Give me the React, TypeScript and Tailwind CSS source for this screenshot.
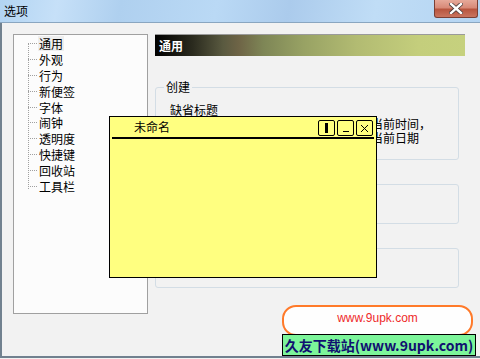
import {ReactNode} from "react";

const font = {fontFamily: '"Noto Sans CJK SC", "Liberation Sans", sans-serif'};

const treeItems: string[] = ["通用", "外观", "行为", "新便签", "字体", "闹钟", "透明度", "快捷键", "回收站", "工具栏"];

function TitleBar() {
    return (
        <div className="relative h-[23px] flex items-center border-b border-[#8aa6c0] bg-[linear-gradient(100deg,#b2d4f2_0%,#c6e0f8_12%,#afd0ef_25%,#bad9f5_45%,#abcbec_60%,#c0ddf6_78%,#b4d4f2_100%)]">
            <span className="pl-[4px] text-[12px] text-black leading-none">选项</span>
            <div className="absolute right-[2px] top-0 w-[44px] h-[18px] rounded-b-[3px] border border-[#7a3f35] border-t-0 bg-[linear-gradient(#e6a99a_0%,#d88a78_45%,#b8553f_55%,#c9745f_100%)] flex items-center justify-center">
                <svg width="14" height="11" viewBox="0 0 14 11">
                    <path d="M2 1 L12 10 M12 1 L2 10" stroke="#4a3a3a" strokeWidth="4" strokeLinecap="square"/>
                    <path d="M2 1 L12 10 M12 1 L2 10" stroke="#ffffff" strokeWidth="2.4" strokeLinecap="square"/>
                </svg>
            </div>
        </div>
    )
}

function Tree() {
    return (
        <div className="w-[135px] h-[280px] border border-[#a0a0a0] bg-[#fcfcfc] pt-[1px] relative">
            <div className="absolute left-[14px] top-[9px] h-[145px] border-l border-dotted border-[#a0a0a0]"></div>
            <ul>
                {treeItems.map((name, i) => (
                    <li key={i} className="h-[15.8px] flex items-center">
                        <span className="ml-[14px] w-[9px] border-t border-dotted border-[#a0a0a0]"></span>
                        <span className={`ml-[1px] px-[1px] text-[12px] leading-[15px] text-black ${i === 0 ? "bg-[#eeeeee]" : ""}`}>{name}</span>
                    </li>
                ))}
            </ul>
        </div>
    )
}

function GroupBox({label, className, children}: { label?: string, className: string, children?: ReactNode }) {
    return (
        <div className={`relative w-[304px] border border-[#d3dde5] rounded-[3px] ${className}`}>
            {label && (
                <span className="absolute left-[8px] -top-[9px] px-[2px] bg-[#f2f2f2] text-[12px] leading-[16px] text-black">{label}</span>
            )}
            {children}
        </div>
    )
}

function Settings() {
    return (
        <div className="flex flex-col w-[310px]">
            <div className="h-[22px] flex items-center bg-[linear-gradient(90deg,#000000_0%,#2a2a1e_12%,#5a5a40_22%,#6e6446_27%,#7e8656_35%,#98a264_48%,#b2bb72_65%,#c4ce7c_85%,#c6d17e_100%)] border-t border-[#9a9a9a]">
                <span className="pl-[4px] text-[12px] font-bold text-white leading-none">通用</span>
            </div>
            <GroupBox label="创建" className="mt-[31px] h-[73px]">
                <div className="pl-[14px] pt-[14px] text-[12px] leading-[15px] text-black">缺省标题</div>
                <div className="pl-[215px] text-[12px] leading-[14px] text-black">
                    <div>当前时间，</div>
                    <div>当前日期</div>
                </div>
            </GroupBox>
            <GroupBox className="mt-[24px] h-[40px]"/>
            <GroupBox className="mt-[24px] h-[40px]"/>
        </div>
    )
}

function StickyNote() {
    return (
        <div className="absolute left-[109px] top-[116px] w-[268px] h-[162px] border border-black bg-[#ffff80]">
            <div className="mx-[2px] h-[22px] border-b-2 border-black flex items-center">
                <span className="ml-[22px] text-[12px] leading-none text-black">未命名</span>
                <div className="ml-auto mr-[1px] flex gap-[2px] mt-[2px]">
                    <div className="w-[17px] h-[16px] border border-black rounded-[2px] flex items-center justify-center">
                        <div className="w-[3px] h-[10px] bg-black"></div>
                    </div>
                    <div className="w-[17px] h-[16px] border border-black rounded-[2px] flex items-end justify-center pb-[3px]">
                        <div className="w-[6px] h-[1px] bg-black"></div>
                    </div>
                    <div className="w-[17px] h-[16px] border border-black rounded-[2px] flex items-center justify-center">
                        <svg width="9" height="9" viewBox="0 0 9 9">
                            <path d="M1 1 L8 8 M8 1 L1 8" stroke="#000" strokeWidth="1"/>
                        </svg>
                    </div>
                </div>
            </div>
        </div>
    )
}

function Watermark() {
    return (
        <div className="absolute left-[282px] top-[305px] w-[194px] h-[51px]">
            <div className="w-[191px] h-[31px] rounded-[14px] border-2 border-[#ff7a2a] bg-[#fefefe] flex items-start justify-center pt-[4px]">
                <span className="text-[12px] text-[#ee2a2a] leading-[14px]" style={{fontFamily: '"Liberation Sans", sans-serif'}}>www.9upk.com</span>
            </div>
            <div className="absolute left-0 top-[29px] w-[194px] h-[22px] border border-black bg-[#7cf59a] flex items-center justify-center">
                <span className="text-[14px] font-bold text-[#101070] leading-none whitespace-nowrap">久友下载站(www.9upk.com)</span>
            </div>
        </div>
    )
}

export default function App() {
    return (
        <div className="relative w-[480px] h-[359px] overflow-hidden bg-[#f2f2f2]" style={font}>
            <TitleBar/>
            <div className="h-[335px] border-l-2 border-b-2 border-[#71818f] flex pl-[11px] pt-[11px] gap-[7px]">
                <Tree/>
                <Settings/>
            </div>
            <StickyNote/>
            <Watermark/>
        </div>
    );
}
